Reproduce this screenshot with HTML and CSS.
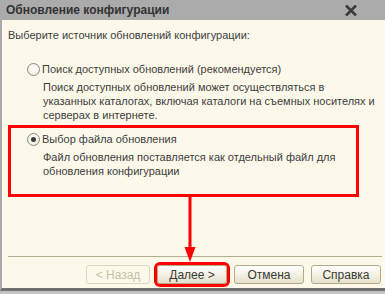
FILE: index.html
```html
<!DOCTYPE html>
<html lang="ru">
<head>
<meta charset="utf-8">
<title>Обновление конфигурации</title>
<link rel="stylesheet" href="styles.css">
</head>
<body>
<div class="window">
  <div class="titlebar">
    <span class="title">Обновление конфигурации</span>
    <svg class="close" width="12" height="11" viewBox="0 0 12 11"><path d="M1 0.5 L11 10.5 M11 0.5 L1 10.5" stroke="#3a3a3a" stroke-width="2.6" fill="none"/></svg>
  </div>
  <div class="content">
    <p class="intro">Выберите источник обновлений конфигурации:</p>
    <div class="option first">
      <label class="radio-row"><span class="radio"></span>Поиск доступных обновлений (рекомендуется)</label>
      <p class="desc">Поиск доступных обновлений может осуществляться в<br>указанных каталогах, включая каталоги на съемных носителях и<br>серверах в интернете.</p>
    </div>
    <div class="option highlight">
      <label class="radio-row"><span class="radio checked"></span>Выбор файла обновления</label>
      <p class="desc">Файл обновления поставляется как отдельный файл для<br>обновления конфигурации</p>
    </div>
    <div class="spacer"></div>
    <div class="separator"></div>
    <div class="buttons">
      <button class="btn back" disabled>&lt; Назад</button>
      <button class="btn marked">Далее &gt;</button>
      <button class="btn">Отмена</button>
      <button class="btn">Справка</button>
    </div>
  </div>
  <svg class="arrow" width="12" height="66" viewBox="0 0 12 66"><rect x="4.5" y="0" width="3" height="54" fill="#f00"/><path d="M0.5 50 L11.5 50 L6 65 Z" fill="#f00"/></svg>
</div>
</body>
</html>
```
FILE: styles.css
```css
* { box-sizing: border-box; }
html, body { margin: 0; padding: 0; }
body {
  width: 385px;
  height: 294px;
  background: #c4c4c4;
  font-family: "Liberation Sans", Arial, sans-serif;
  font-size: 11px;
  color: #3d3d3d;
  overflow: hidden;
}
.window {
  position: relative;
  width: 385px;
  height: 291px;
  display: flex;
  flex-direction: column;
  border-left: 2px solid #a9a9a9;
  border-bottom: 3px solid #6f6f6f;
  background: #fcf9eb;
}
.titlebar {
  height: 20px;
  margin-left: -2px;
  background: #ababab;
  display: flex;
  align-items: center;
  justify-content: space-between;
  padding: 0 28px 0 6px;
}
.title {
  font-weight: bold;
  font-size: 12px;
  color: #333;
}
.close { display: block; margin-top: 1px; }
.content {
  flex: 1;
  display: flex;
  flex-direction: column;
  padding: 8px 4px 4px 6px;
}
.intro {
  margin: 0;
  line-height: 15px;
}
.option { display: flex; flex-direction: column; }
.option.first {
  margin-top: 19px;
  padding-left: 19px;
}
.option.highlight {
  margin-top: 3px;
  width: 351px;
  height: 72px;
  border: 3px solid #f00;
  padding: 4px 0 0 16px;
}
.radio-row {
  display: flex;
  align-items: center;
  height: 14px;
  line-height: 14px;
}
.radio {
  width: 13px;
  height: 13px;
  border-radius: 50%;
  border: 1px solid #8d8a80;
  background: radial-gradient(circle at 50% 40%, #ffffff 0%, #f4f2ea 60%, #e2ded0 100%);
  margin-right: 2px;
  display: flex;
  align-items: center;
  justify-content: center;
}
.radio.checked::after {
  content: "";
  width: 5px;
  height: 5px;
  border-radius: 50%;
  background: #3a3a3a;
}
.desc {
  margin: 4px 0 0 16px;
  line-height: 14px;
  white-space: nowrap;
}
.spacer { flex: 1; }
.separator {
  height: 1px;
  background: #b3ae8e;
  margin: 0 -1px 0 0;
}
.buttons {
  display: flex;
  justify-content: flex-end;
  gap: 7px;
  margin-top: 8px;
  margin-bottom: 0;
}
.btn {
  width: 70px;
  height: 19px;
  padding: 0;
  font-family: "Liberation Sans", Arial, sans-serif;
  font-size: 12px;
  color: #3a3a3a;
  border: 1px solid #b1ab8c;
  border-radius: 3px;
  background: linear-gradient(#ffffff, #f3f0e1 55%, #e6e1cc);
}
.btn.back {
  width: 64px;
  color: #c7bfa2;
  border-color: #dcd6bf;
  background: #fcf9eb;
}
.btn.marked {
  outline: 3px solid #f00;
  outline-offset: 0;
}
.arrow {
  position: absolute;
  left: 182px;
  top: 197px;
}
```
